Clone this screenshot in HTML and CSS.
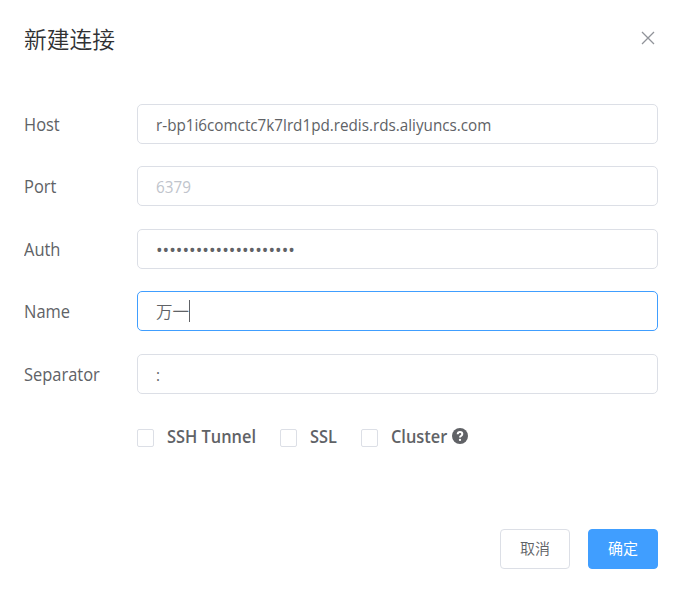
FILE: index.html
```html
<!DOCTYPE html>
<html lang="zh-CN">
<head>
<meta charset="utf-8">
<title>新建连接</title>
<link rel="stylesheet" href="styles.css">
</head>
<body>
<main class="dialog">
  <header class="dialog-header">
    <h1 class="title">新建连接</h1>
    <svg class="close" viewBox="0 0 14 14"><path d="M1 1L13 13M13 1L1 13"/></svg>
  </header>
  <form class="form">
    <div class="row"><label class="label"><span>Host</span></label><div class="field"><span class="latin">r-bp1i6comctc7k7lrd1pd.redis.rds.aliyuncs.com</span></div></div>
    <div class="row"><label class="label"><span>Port</span></label><div class="field placeholder"><span class="latin">6379</span></div></div>
    <div class="row"><label class="label"><span>Auth</span></label><div class="field"><span class="dots">•••••••••••••••••••••</span></div></div>
    <div class="row"><label class="label"><span>Name</span></label><div class="field focused"><span class="cjk">万一</span><i class="caret"></i></div></div>
    <div class="row"><label class="label"><span>Separator</span></label><div class="field"><span class="latin">:</span></div></div>
    <div class="options">
      <label class="option ssh"><i class="box"></i><span>SSH Tunnel</span></label>
      <label class="option ssl"><i class="box"></i><span>SSL</span></label>
      <label class="option cluster"><i class="box"></i><span>Cluster</span></label>
      <svg class="help" viewBox="0 0 16 16"><circle cx="8" cy="8" r="8"/><path d="M5.7 6.2Q5.8 4 8 4Q10.3 4 10.3 6Q10.3 7.1 9.1 7.8Q8 8.4 8 9.5"/><circle class="dot" cx="8" cy="11.9" r="1.15"/></svg>
    </div>
  </form>
  <footer class="footer">
    <button class="button"><span>取消</span></button>
    <button class="button primary"><span>确定</span></button>
  </footer>
</main>
</body>
</html>
```
FILE: styles.css
```css
* { box-sizing: border-box; }
body { margin: 0; background: #fff; color: #606266; font: 17.5px/40px "Open Sans", "Noto Sans CJK SC", sans-serif; }
.dialog { width: 677px; height: 590px; padding: 20px 19px 21px 24px; display: flex; flex-direction: column; }
.dialog-header { display: flex; justify-content: space-between; height: 84px; }
.title { margin: 0; font: 350 22.75px/38px "Noto Sans CJK SC", sans-serif; color: #303133; }
.close { width: 14px; height: 14px; margin: 11px 3px 0 0; fill: none; stroke: #909399; stroke-width: 1.3; }
.form { display: flex; flex-direction: column; gap: 22.4px; }
.row { display: flex; height: 40px; }
.label { width: 113px; line-height: 41px; white-space: nowrap; }
.label span, .field span, .option span { display: inline-block; transform-origin: left center; }
.label span { transform: scaleX(.94); }
.field { flex: 1; display: flex; align-items: center; height: 40px; padding: 0 18px; border: 1px solid #dcdfe6; border-radius: 5px; font-size: 16px; white-space: nowrap; }
.field .latin { margin-top: 2px; transform: scaleX(.952); }
.field .cjk { font-family: "Noto Sans CJK SC", sans-serif; font-weight: 350; font-size: 16.5px; }
.field .dots { margin-top: 3px; font-size: 17.6px; }
.placeholder { color: #c0c4cc; }
.focused { border-color: #409eff; }
.caret { width: 1px; height: 22px; background: #606266; }
.options { display: flex; align-items: center; height: 40px; margin-left: 113px; font-size: 17.5px; font-weight: 600; }
.option { display: flex; align-items: center; height: 40px; white-space: nowrap; }
.option span { margin-top: 1px; transform: scaleX(.935); }
.box { width: 17px; height: 18px; margin: 4px 12.5px 0 0; border: 1px solid #dcdfe6; border-radius: 2px; flex: none; }
.ssh { width: 143px; }
.ssl { width: 81px; }
.cluster { width: 91px; }
.help { width: 16px; height: 16px; fill: #606266; }
.help path { fill: none; stroke: #fff; stroke-width: 2; }
.help .dot { fill: #fff; }
.footer { display: flex; justify-content: flex-end; gap: 18px; margin-top: auto; }
.button { width: 70px; height: 40px; padding: 0 0 2px; border: 1px solid #dcdfe6; border-radius: 4px; background: #fff; color: #606266; font: 350 15px/36px "Noto Sans CJK SC", sans-serif; }
.primary { border-color: #409eff; background: #409eff; color: #fff; font-weight: 400; }
```
